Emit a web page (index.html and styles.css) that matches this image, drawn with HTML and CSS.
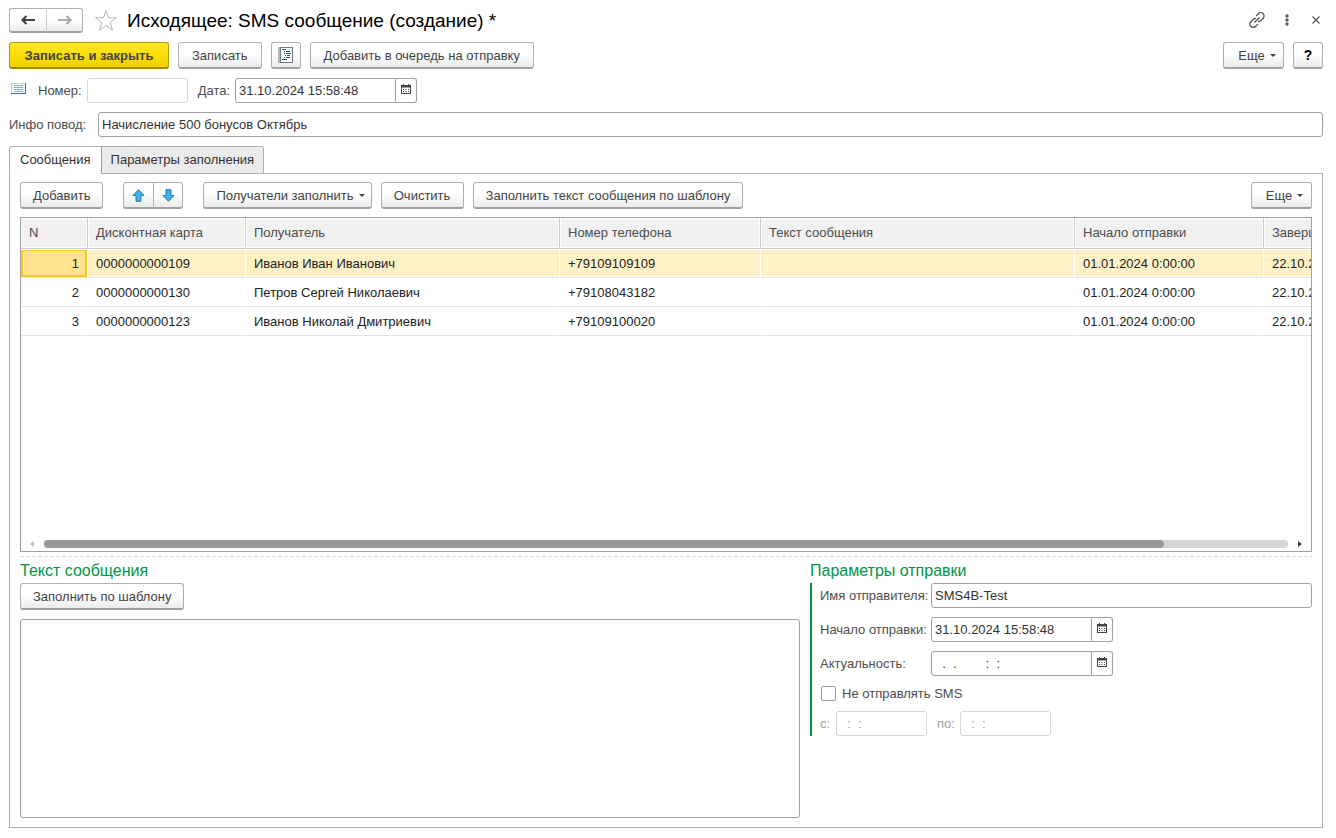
FILE: index.html
```html
<!DOCTYPE html>
<html lang="ru">
<head>
<meta charset="utf-8">
<title>Исходящее: SMS сообщение (создание)</title>
<link rel="stylesheet" href="styles.css">
</head>
<body>
<svg class="defs" aria-hidden="true">
  <symbol id="calendar" viewBox="0 0 10 10">
    <path fill="#444" d="M2 0H3V1H7V0H8V1H10V10H0V1H2Z"/>
    <path fill="#fff" d="M1 3.500H9V9H1Z"/>
    <path d="M2 5.500H8M2 7.500H8" stroke="#444" stroke-dasharray="1 1.500"/>
  </symbol>
</svg>
<main class="page">
  <header class="titlebar">
    <div class="btn-group nav">
      <button class="btn" type="button" aria-label="Назад"><svg width="16" height="12" viewBox="0 0 16 12"><path d="M15 6H3M6.500 2L2.500 6L6.500 10" fill="none" stroke="#444" stroke-width="2.200"/></svg></button>
      <button class="btn" type="button" aria-label="Вперед"><svg width="16" height="12" viewBox="0 0 16 12"><path d="M1 6H13M9.500 2L13.500 6L9.500 10" fill="none" stroke="#aaa" stroke-width="2.200"/></svg></button>
    </div>
    <button class="icon-btn star" type="button" aria-label="В избранное"><svg width="24" height="23" viewBox="0 0 24 23"><path d="M12 1.500L14.600 8.800H22.500L16.200 13.500L18.600 21.200L12 16.600L5.400 21.200L7.800 13.500L1.500 8.800H9.400Z" fill="#fff" stroke="#b2b7be"/></svg></button>
    <h1 class="title">Исходящее: SMS сообщение (создание) *</h1>
    <div class="window-tools">
      <button class="icon-btn" type="button" aria-label="Ссылка"><svg width="16" height="16" viewBox="0 0 16 16" fill="none" stroke="#555" stroke-width="1.300"><path d="M7 4L9.300 1.700A2.900 2.900 0 0 1 14.200 6.200L11.500 9Q10.300 9.800 9 9.300M9 12L6.700 14.300A2.900 2.900 0 0 1 1.800 9.800L4.500 7Q5.700 6.200 7 6.700M5.500 10.500L10.500 5.500"/></svg></button>
      <button class="icon-btn" type="button" aria-label="Меню"><svg width="4" height="12" viewBox="0 0 4 12" fill="#555"><rect x="0.500" y="0.500" width="3" height="3" rx="1"/><rect x="0.500" y="4.500" width="3" height="3" rx="1"/><rect x="0.500" y="8.500" width="3" height="3" rx="1"/></svg></button>
      <button class="icon-btn" type="button" aria-label="Закрыть"><svg width="8" height="8" viewBox="0 0 8 8"><path d="M0.500 0.500L7.500 7.500M7.500 0.500L0.500 7.500" stroke="#555" stroke-width="1.200"/></svg></button>
    </div>
  </header>

  <div class="toolbar">
    <button class="btn primary" type="button">Записать и закрыть</button>
    <button class="btn" type="button">Записать</button>
    <button class="btn square" type="button" aria-label="Отчет"><svg width="16" height="16" viewBox="0 0 16 16"><path d="M0 0H2V16H0Z" fill="#b5b5b5"/><rect x="2.500" y="0.500" width="12" height="15" fill="#fff" stroke="#777"/><path d="M4 2.500H8M6 4.500H7M8 4.500H12M6 6.500H7M8 6.500H13M7 8.500H8M9 8.500H12M6 10.500H7M8 10.500H12M4 12.500H9" stroke="#1c526e"/></svg></button>
    <button class="btn" type="button">Добавить в очередь на отправку</button>
    <button class="btn menu push" type="button">Еще</button>
    <button class="btn help" type="button">?</button>
  </div>

  <div class="fields">
    <svg class="doc-icon" width="15" height="12" viewBox="0 0 15 12"><rect x="0.500" y="0.500" width="14" height="10" fill="#fff" stroke="#b4cddb"/><path d="M14.500 0V11M0 10.500H15" stroke="#4c7186"/><path d="M3 2.500H12M3 4.500H12M3 6.500H12M3 8.500H12" stroke="#79aac4"/></svg>
    <label for="number">Номер:</label>
    <input class="input number disabled" id="number" type="text" disabled>
    <label class="date-label" for="date">Дата:</label>
    <span class="picker"><input class="input" id="date" type="text" value="31.10.2024 15:58:48"><button type="button" aria-label="Выбрать дату"><svg width="10" height="10"><use href="#calendar"/></svg></button></span>
  </div>

  <div class="info">
    <label for="info">Инфо повод:</label>
    <input class="input" id="info" type="text" value="Начисление 500 бонусов Октябрь">
  </div>

  <div class="tabs" role="tablist">
    <button class="tab active" type="button" role="tab" aria-selected="true">Сообщения</button>
    <button class="tab" type="button" role="tab" aria-selected="false">Параметры заполнения</button>
  </div>

  <section class="panel">
    <div class="toolbar compact">
      <button class="btn" type="button">Добавить</button>
      <div class="btn-group move">
        <button class="btn" type="button" aria-label="Вверх"><svg width="13" height="13" viewBox="0 0 13 13"><path d="M6.500 0.700L12 6.500H9V12.300H4V6.500H1Z" fill="#3fb0f0" stroke="#2b79a5"/></svg></button>
        <button class="btn" type="button" aria-label="Вниз"><svg width="13" height="13" viewBox="0 0 13 13"><path d="M6.500 12.300L12 6.500H9V0.700H4V6.500H1Z" fill="#3fb0f0" stroke="#2b79a5"/></svg></button>
      </div>
      <button class="btn menu" type="button">Получатели заполнить</button>
      <button class="btn" type="button">Очистить</button>
      <button class="btn" type="button">Заполнить текст сообщения по шаблону</button>
      <button class="btn menu push" type="button">Еще</button>
    </div>

    <div class="grid">
      <table>
        <colgroup><col class="c-n"><col class="c-card"><col class="c-wide"><col class="c-phone"><col class="c-wide"><col class="c-date"><col class="c-date"></colgroup>
        <thead>
          <tr><th>N</th><th>Дисконтная карта</th><th>Получатель</th><th>Номер телефона</th><th>Текст сообщения</th><th>Начало отправки</th><th>Завершение</th></tr>
        </thead>
        <tbody>
          <tr class="selected"><td>1</td><td>0000000000109</td><td>Иванов Иван Иванович</td><td>+79109109109</td><td></td><td>01.01.2024 0:00:00</td><td>22.10.2024</td></tr>
          <tr><td>2</td><td>0000000000130</td><td>Петров Сергей Николаевич</td><td>+79108043182</td><td></td><td>01.01.2024 0:00:00</td><td>22.10.2024</td></tr>
          <tr><td>3</td><td>0000000000123</td><td>Иванов Николай Дмитриевич</td><td>+79109100020</td><td></td><td>01.01.2024 0:00:00</td><td>22.10.2024</td></tr>
        </tbody>
      </table>
      <div class="scrollbar">
        <svg width="4" height="6" viewBox="0 0 4 6"><path d="M4 0V6L0 3Z" fill="#bbb"/></svg>
        <div class="track"><div class="thumb"></div></div>
        <svg width="4" height="6" viewBox="0 0 4 6"><path d="M0 0V6L4 3Z" fill="#444"/></svg>
      </div>
    </div>
    <div class="splitter"></div>

    <div class="details">
      <section class="message compact">
        <h2>Текст сообщения</h2>
        <button class="btn" type="button">Заполнить по шаблону</button>
        <textarea aria-label="Текст сообщения"></textarea>
      </section>
      <section class="sending">
        <h2>Параметры отправки</h2>
        <div class="params">
          <div class="row"><label for="sender">Имя отправителя:</label><input class="input" id="sender" type="text" value="SMS4B-Test"></div>
          <div class="row"><label for="start">Начало отправки:</label><span class="picker"><input class="input" id="start" type="text" value="31.10.2024 15:58:48"><button type="button" aria-label="Выбрать начало"><svg width="10" height="10"><use href="#calendar"/></svg></button></span></div>
          <div class="row"><label for="until">Актуальность:</label><span class="picker"><input class="input" id="until" type="text" value="  .  .        :  :"><button type="button" aria-label="Выбрать срок"><svg width="10" height="10"><use href="#calendar"/></svg></button></span></div>
          <label class="check"><input type="checkbox">Не отправлять SMS</label>
          <div class="period">
            <label for="from">с:</label><input class="input disabled" id="from" type="text" value="  :  :" disabled>
            <label class="to" for="to">по:</label><input class="input disabled" id="to" type="text" value="  :  :" disabled>
          </div>
        </div>
      </section>
    </div>
  </section>
</main>
</body>
</html>
```

FILE: styles.css
```css
* { box-sizing: border-box; }
body { margin: 0; background: #fff; color: #4d4d4d; }
body, button, input, textarea { font-family: "Liberation Sans", Arial, sans-serif; font-size: 13px; }
.defs { position: absolute; width: 0; height: 0; }
.page { min-height: 100vh; padding: 8px 13px 10px 9px; display: flex; flex-direction: column; }
svg { display: block; }

.titlebar { display: flex; align-items: center; height: 25px; margin-bottom: 9px; }
.title { margin: 0 auto 0 9px; font-size: 19px; font-weight: 400; line-height: 24px; color: #000; white-space: nowrap; }
.icon-btn { padding: 0; border: 0; background: none; }
.star { margin-left: 11px; }
.window-tools { display: flex; align-items: center; gap: 20px; padding: 0 3px 2px 0; }
.window-tools .icon-btn:last-child { margin-left: 3px; }

.btn {
  height: 27px; min-width: 83px; padding: 0 13px; flex: none;
  display: inline-flex; align-items: center; justify-content: center;
  border: 1px solid #b0b0b0; border-bottom: 2px solid #a0a0a0; border-radius: 3px;
  background: linear-gradient(#fff 45%, #ebebeb);
  color: #444; white-space: nowrap;
}
.compact .btn { padding: 0 12px; }
.btn-group { display: flex; }
.btn-group .btn, .compact .btn-group .btn { min-width: 0; padding: 0; }
.btn-group .btn:first-child { border-radius: 3px 0 0 3px; }
.btn-group .btn:last-child { border-left: 0; border-radius: 0 3px 3px 0; }
.nav .btn { height: 25px; }
.nav .btn:first-child { width: 38px; border-right-color: #ccc; }
.nav .btn:last-child { width: 36px; }
.move { margin: 0 11px; }
.move .btn { width: 31px; }
.move .btn:last-child { width: 29px; }
.primary {
  min-width: 160px;
  border-color: #b39b00; border-bottom-color: #a08b00;
  background: linear-gradient(#ffe92e, #fbdc00 55%, #ecd000);
  font-weight: 700;
}
.square, .help { min-width: 30px; padding: 0; }
.help { color: #000; font-size: 14px; font-weight: 700; }
.menu, .compact .menu { min-width: 61px; gap: 5px; padding-right: 6px; }
.menu::after { content: ""; border: 3px solid transparent; border-top-color: #444; border-bottom: 0; }
.push { margin-left: auto; }

.toolbar { display: flex; gap: 9px; }

.fields { display: flex; align-items: center; height: 25px; margin-top: 9px; }
.doc-icon { margin: 0 12px 4px 2px; }
.input {
  height: 25px; min-width: 0; padding: 0 3px;
  border: 1px solid #a0a0a0; border-radius: 3px; background: #fff; color: #333;
}
.disabled { border-color: #d6d6d6; color: #a0a0a0; }
.number { width: 101px; margin-left: 5px; }
.date-label { margin: 0 5px 0 10px; }
.picker { display: flex; width: 182px; }
.picker .input { flex: 1; border-radius: 3px 0 0 3px; }
.picker button {
  width: 21px; padding: 0 0 3px; display: flex; align-items: center; justify-content: center;
  border: 1px solid #a0a0a0; border-left: 0; border-radius: 0 3px 3px 0; background: #fff;
}

.info { display: flex; align-items: center; margin: 9px 0; }
.info label { width: 89px; }
.info .input { flex: 1; }

.tabs { display: flex; height: 28px; margin-bottom: -1px; z-index: 1; }
.tab { padding: 0 9px 2px; border: 1px solid #b0b0b0; background: #ebebeb; color: #333; }
.tab.active { padding: 0 10px 2px; border-bottom-color: #fff; border-radius: 3px 0 0 0; background: #fff; }
.tab + .tab { border-left-color: #a0a0a0; margin-left: -1px; border-radius: 0 3px 0 0; }

.panel { flex: 1; display: flex; flex-direction: column; padding: 8px 10px 9px; border: 1px solid #b0b0b0; min-width: 0; }

.grid { display: flex; flex-direction: column; min-height: 335px; margin-top: 8px; border: 1px solid #a0a0a0; overflow: hidden; }
table { width: 1432px; table-layout: fixed; border-collapse: separate; border-spacing: 0; }
.c-n { width: 67px; }
.c-card { width: 158px; }
.c-wide { width: 314px; }
.c-phone { width: 201px; }
.c-date { width: 189px; }
th, td { padding: 0 8px; text-align: left; font-weight: 400; white-space: nowrap; overflow: hidden; }
th { height: 31px; padding-bottom: 2px; border-right: 1px solid #ccc; border-bottom: 1px solid #ccc; background: #f1f1f1; box-shadow: inset 0 0 0 1px #fff; color: #4d4d4d; }
td { height: 29px; border-bottom: 1px solid #e4e4e4; border-right: 1px solid #fff; color: #222; }
td:first-child { text-align: right; }
.selected td { background: #fef1c6; box-shadow: inset 0 1px #fff, inset 0 -1px #fff; }
.selected td:first-child { background: #ffe48d; box-shadow: inset 0 1px #fff, inset 0 0 0 2px #f8c721; }
.scrollbar { display: flex; align-items: center; margin-top: auto; height: 14px; padding: 0 9px; gap: 10px; }
.track { flex: 1; height: 8px; border-radius: 4px; background: #d6d6d6; }
.thumb { width: 90%; height: 8px; border-radius: 4px; background: #999; }
.splitter { height: 1px; margin: 4px 0; background: repeating-linear-gradient(90deg, #d6d6d6 0 4px, #fff 4px 6px); }

.details { flex: 1; display: grid; grid-template-columns: 780fr 502fr; gap: 10px; }
h2 { margin: 0 0 3px; font-size: 16px; line-height: 19px; font-weight: 400; color: #009646; }
.message { display: flex; flex-direction: column; align-items: flex-start; }
textarea { flex: 1; width: 100%; margin: 9px 0 0; border: 1px solid #a0a0a0; border-radius: 3px; resize: none; background: #fff; }
.params { display: flex; flex-direction: column; gap: 9px; padding-left: 8px; border-left: 2px solid #009646; }
.row { display: flex; align-items: center; }
.row label { width: 111px; white-space: nowrap; }
.row > .input { flex: 1; }
.check { display: flex; align-items: center; gap: 6px; height: 17px; }
.check input { appearance: none; width: 15px; height: 15px; margin: 0 0 0 1px; border: 1px solid #999; border-radius: 2px; background: #fff; }
.period { display: flex; align-items: center; color: #a0a0a0; }
.period .input { width: 91px; }
.period label { width: 16px; }
.period .to { width: 23px; margin-left: 10px; }
```
